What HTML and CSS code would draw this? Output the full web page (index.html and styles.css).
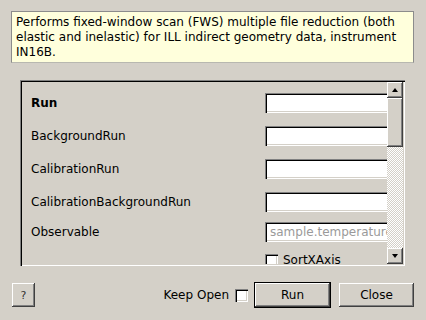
FILE: index.html
```html
<!DOCTYPE html>
<html>
<head>
<meta charset="utf-8">
<link rel="stylesheet" href="styles.css">
</head>
<body>
<div class="dialog">
  <div class="desc">Performs fixed-window scan (FWS) multiple file reduction (both elastic and inelastic) for ILL indirect geometry data, instrument IN16B.</div>
  <div class="frame">
    <div class="viewport">
      <div class="form">
        <div class="row"><span class="label bold">Run</span><span class="input"></span></div>
        <div class="row"><span class="label">BackgroundRun</span><span class="input"></span></div>
        <div class="row"><span class="label">CalibrationRun</span><span class="input"></span></div>
        <div class="row"><span class="label">CalibrationBackgroundRun</span><span class="input"></span></div>
        <div class="row row-obs"><span class="label">Observable</span><span class="input"><span class="placeholder">sample.temperature</span></span></div>
        <div class="row row-check"><span class="label"></span><span class="checkline"><span class="checkbox"></span><span>SortXAxis</span></span></div>
      </div>
    </div>
    <div class="vscroll">
      <div class="sbtn raised"><span class="arrow-up"></span></div>
      <div class="slider raised"></div>
      <div class="trough"></div>
      <div class="sbtn raised"><span class="arrow-down"></span></div>
    </div>
  </div>
  <div class="buttons">
    <div class="btn raised help">?</div>
    <div class="spacer"></div>
    <span class="keep">Keep Open</span>
    <span class="checkbox keep-box"></span>
    <div class="btn default"><div class="btn-inner raised">Run</div></div>
    <div class="btn raised close">Close</div>
  </div>
</div>
</body>
</html>
```

FILE: styles.css
```css
html, body {
  margin: 0;
  padding: 0;
  background: #d4d0c8;
  font-family: "DejaVu Sans", sans-serif;
  font-size: 12px;
  color: #000;
}
.dialog {
  width: 426px;
  height: 320px;
  box-sizing: border-box;
  padding: 11px 12px 0 11px;
  display: flex;
  flex-direction: column;
}
.desc {
  width: 403px;
  height: 52px;
  box-sizing: border-box;
  background: #ffffdc;
  border: 1px solid #8c8c8c;
  border-bottom-color: #b8b8b0;
  padding: 3px 0 0 4px;
  line-height: 15px;
}
.frame {
  margin: 17px 0 0 9px;
  width: 385px;
  height: 186px;
  box-sizing: border-box;
  padding: 2px;
  display: flex;
  box-shadow: inset 1px 1px #808080, inset 2px 2px #000, inset -1px -1px #fff, inset -2px -2px #d4d0c8;
}
.viewport {
  flex: 1;
  overflow: hidden;
  position: relative;
}
.form {
  padding: 11px 0 0 9px;
  display: flex;
  flex-direction: column;
}
.row {
  display: grid;
  grid-template-columns: 234px 140px;
  align-items: center;
  height: 20px;
  margin-bottom: 13px;
}
.row-obs {
  margin-top: -3px;
  margin-bottom: 11px;
}
.row-check {
  height: 13px;
}
.label.bold { font-weight: bold; }
.input {
  height: 20px;
  box-sizing: border-box;
  background: #fff;
  box-shadow: inset 1px 1px #808080, inset 2px 2px #000, inset -1px -1px #fff, inset -2px -2px #d4d0c8;
  padding: 0 0 0 5px;
  display: flex;
  align-items: center;
  overflow: hidden;
  white-space: nowrap;
}
.placeholder { color: #9a9a9a; }
.checkline {
  display: flex;
  align-items: center;
  gap: 5px;
  white-space: nowrap;
}
.checkbox {
  display: inline-block;
  width: 13px;
  height: 13px;
  box-sizing: border-box;
  background: #fff;
  box-shadow: inset 1px 1px #808080, inset 2px 2px #000, inset -1px -1px #fff, inset -2px -2px #d4d0c8;
  flex: none;
}
.vscroll {
  width: 16px;
  display: flex;
  flex-direction: column;
}
.raised {
  background: #d4d0c8;
  box-shadow: inset -1px -1px #404040, inset 1px 1px #fff, inset -2px -2px #808080;
}
.sbtn {
  height: 16px;
  flex: none;
  display: flex;
  align-items: center;
  justify-content: center;
}
.arrow-up, .arrow-down {
  width: 0;
  height: 0;
  border-left: 3.5px solid transparent;
  border-right: 3.5px solid transparent;
}
.arrow-up { border-bottom: 4px solid #000; margin-top: -1px; }
.arrow-down { border-top: 4px solid #000; }
.slider {
  height: 49px;
  flex: none;
}
.trough {
  flex: 1;
  background: repeating-conic-gradient(#d4d0c8 0 25%, #fff 0 50%) 0 0 / 2px 2px;
}
.buttons {
  margin-top: 16px;
  height: 26px;
  display: flex;
  align-items: center;
}
.btn {
  box-sizing: border-box;
  display: flex;
  align-items: center;
  justify-content: center;
}
.help {
  margin-left: 1px;
  width: 23px;
  height: 24px;
  font-size: 11px;
  color: #333;
}
.spacer { flex: 1; }
.keep { margin-right: 6px; }
.keep-box { margin-right: 6px; }
.default {
  width: 77px;
  height: 26px;
  border: 1px solid #000;
}
.btn-inner {
  width: 100%;
  height: 100%;
  display: flex;
  align-items: center;
  justify-content: center;
}
.close {
  margin-left: 8px;
  width: 75px;
  height: 24px;
}
```
